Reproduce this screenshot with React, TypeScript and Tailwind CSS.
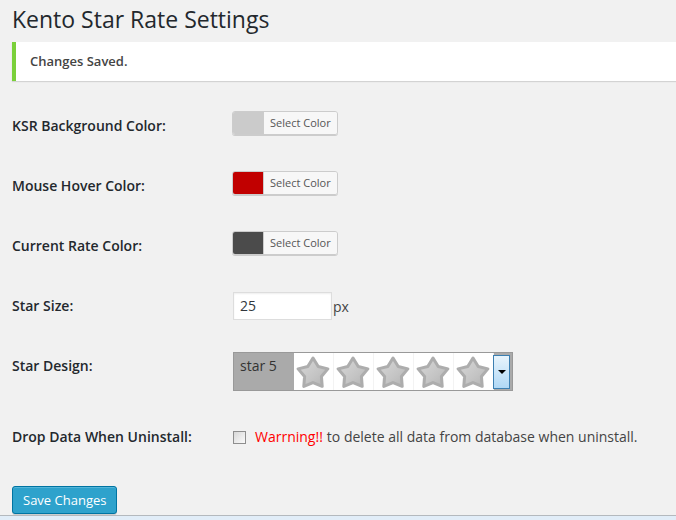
import React from "react";

const font = { fontFamily: '"Open Sans", "Noto Sans", sans-serif' };

function ColorButton({ color }: { color: string }) {
  return (
    <div className="flex h-6 w-[106px] overflow-hidden rounded-[3px] border border-[#ccc] shadow-[0_1px_0_#ccc]">
      <span className="w-[30px] shrink-0" style={{ backgroundColor: color }} />
      <span className="flex-1 border-l border-[#ccc] bg-[#f7f7f7] px-[6px] text-[11px] leading-[22px] text-[#555]">
        Select Color
      </span>
    </div>
  );
}

function Star({ id }: { id: number }) {
  return (
    <svg width="34" height="34" viewBox="0 0 100 100">
      <defs>
        <linearGradient id={`sg${id}`} x1="0" y1="0" x2="1" y2="1">
          <stop offset="0" stopColor="#d8d8d8" />
          <stop offset="0.55" stopColor="#c6c6c6" />
          <stop offset="1" stopColor="#b2b2b2" />
        </linearGradient>
      </defs>
      <path
        d="M50 9 L65.3 34 L93.7 40.8 L74.7 63 L77 92.2 L50 81 L23 92.2 L25.3 63 L6.3 40.8 L34.7 34 Z"
        fill={`url(#sg${id})`}
        stroke="#adadad"
        strokeWidth="9"
        strokeLinejoin="round"
      />
    </svg>
  );
}

function Row({ label, h, pt, children }: { label: string; h: string; pt: string; children: React.ReactNode }) {
  return (
    <div className={`flex ${h}`}>
      <div className="w-[220px] shrink-0 pt-[10px] text-[14px] font-semibold leading-[20px] text-[#23282d]">{label}</div>
      <div className={pt}>{children}</div>
    </div>
  );
}

export default function App() {
  return (
    <div className="min-h-[520px] overflow-hidden bg-[#f1f1f1]" style={font}>
      <div className="pl-[12px]">
        <h2 className="pt-[5px] text-[23px] font-normal leading-[29px] text-[#23282d]">Kento Star Rate Settings</h2>

        <div className="mt-[8px] flex h-[39px] items-center border-l-4 border-[#7ad03a] bg-white pl-[14px] shadow-[0_1px_1px_rgba(0,0,0,0.12)]">
          <strong className="text-[13px] font-semibold text-[#444]">Changes Saved.</strong>
        </div>

        <div className="mt-[25px]">
          <Row label="KSR Background Color:" h="h-[60px]" pt="pt-[5px]">
            <ColorButton color="#cbcbcb" />
          </Row>
          <Row label="Mouse Hover Color:" h="h-[60px]" pt="pt-[5px]">
            <ColorButton color="#c10000" />
          </Row>
          <Row label="Current Rate Color:" h="h-[60px]" pt="pt-[5px]">
            <ColorButton color="#4b4b4b" />
          </Row>
          <Row label="Star Size:" h="h-[60px]" pt="pt-[6px] pl-px">
            <div className="flex items-center">
              <div className="h-[28px] w-[99px] border border-[#ddd] bg-white px-[6px] text-[14px] leading-[26px] text-[#32373c] shadow-[inset_0_1px_2px_rgba(0,0,0,0.07)]">
                25
              </div>
              <span className="ml-[1px] text-[14px] text-[#444]">px</span>
            </div>
          </Row>
          <Row label="Star Design:" h="h-[71px]" pt="pt-[6px] pl-px">
            <div className="flex h-[39px] w-[280px] border border-[#999] bg-[#aaa]">
              <div className="w-[60px] shrink-0 px-[6px] pt-[3px] text-[14px] leading-[20px] text-[#333]">star 5</div>
              <div className="flex h-full w-[200px] bg-white">
                {[0, 1, 2, 3, 4].map((i) => (
                  <div key={i} className="h-full w-[40px] border-r border-[#f3f3f3] pl-[2px] pt-[2px]">
                    <Star id={i} />
                  </div>
                ))}
              </div>
              <div className="-ml-px mt-[2px] flex h-[34px] w-[17px] items-center justify-center border border-[#3c7fb1] bg-gradient-to-b from-[#e8f4fc] to-[#b0d8f5]">
                <span className="h-0 w-0 border-x-[4px] border-t-[4px] border-x-transparent border-t-black" />
              </div>
            </div>
          </Row>
          <Row label="Drop Data When Uninstall:" h="h-[69px]" pt="pt-[10px] pl-px">
            <div className="flex items-center text-[14px] leading-[20px]">
              <span className="h-[13px] w-[13px] border border-[#8e8e8e] bg-gradient-to-br from-[#d8d8d8] to-[#fafafa]" />
              <span className="ml-[9px] text-[#f00]">Warrning!!</span>
              <span className="ml-[4px] text-[#444]">to delete all data from database when uninstall.</span>
            </div>
          </Row>
        </div>

        <button className="h-[28px] rounded-[3px] border border-[#0074a2] bg-[#2ea2cc] px-[10px] pb-px text-[13px] leading-[26px] text-white shadow-[inset_0_1px_0_rgba(120,200,230,0.5),0_1px_0_rgba(0,0,0,0.15)]">
          Save Changes
        </button>
      </div>
      <div className="mt-[1px] h-[10px] border-t border-[#b4b9be] bg-[#e1edf8]" />
    </div>
  );
}
